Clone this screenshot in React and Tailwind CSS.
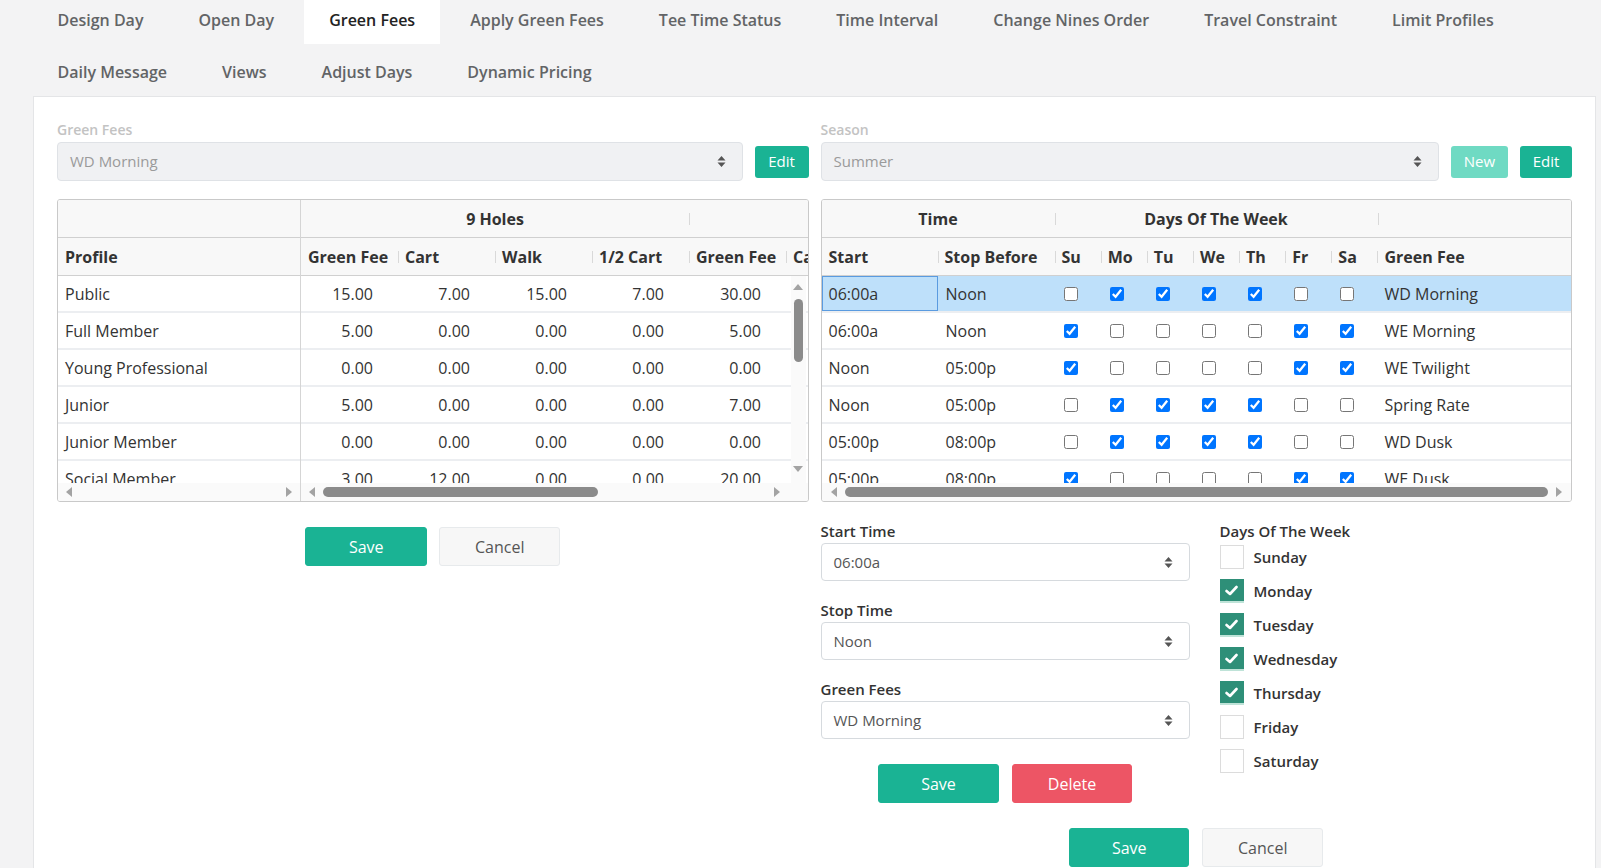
import React from 'react';

const TABS_1 = ['Design Day', 'Open Day', 'Green Fees', 'Apply Green Fees', 'Tee Time Status', 'Time Interval', 'Change Nines Order', 'Travel Constraint', 'Limit Profiles'];
const TABS_2 = ['Daily Message', 'Views', 'Adjust Days', 'Dynamic Pricing'];

const FEES = [
  ['Public', ['15.00', '7.00', '15.00', '7.00', '30.00']],
  ['Full Member', ['5.00', '0.00', '0.00', '0.00', '5.00']],
  ['Young Professional', ['0.00', '0.00', '0.00', '0.00', '0.00']],
  ['Junior', ['5.00', '0.00', '0.00', '0.00', '7.00']],
  ['Junior Member', ['0.00', '0.00', '0.00', '0.00', '0.00']],
  ['Social Member', ['3.00', '12.00', '0.00', '0.00', '20.00']],
];

const WD = [0, 1, 1, 1, 1, 0, 0];
const WE = [1, 0, 0, 0, 0, 1, 1];
const SEASON_ROWS = [
  ['06:00a', 'Noon', WD, 'WD Morning'],
  ['06:00a', 'Noon', WE, 'WE Morning'],
  ['Noon', '05:00p', WE, 'WE Twilight'],
  ['Noon', '05:00p', WD, 'Spring Rate'],
  ['05:00p', '08:00p', WD, 'WD Dusk'],
  ['05:00p', '08:00p', WE, 'WE Dusk'],
];

const DAYS = ['Su', 'Mo', 'Tu', 'We', 'Th', 'Fr', 'Sa'];
const DAY_LIST = [
  ['Sunday', false],
  ['Monday', true],
  ['Tuesday', true],
  ['Wednesday', true],
  ['Thursday', true],
  ['Friday', false],
  ['Saturday', false],
];

const SortIcon = () => (
  <svg width="9" height="13" viewBox="0 0 9 13">
    <path d="M4.5 1L8.5 5.5H0.5Z M4.5 12L8.5 7.5H0.5Z" fill="#555" />
  </svg>
);

const ArrowL = () => (
  <svg width="6" height="10" viewBox="0 0 6 10"><path d="M6 0V10L0 5Z" fill="#a3a3a3" /></svg>
);
const ArrowR = () => (
  <svg width="6" height="10" viewBox="0 0 6 10"><path d="M0 0V10L6 5Z" fill="#a3a3a3" /></svg>
);
const ArrowU = () => (
  <svg width="10" height="6" viewBox="0 0 10 6"><path d="M0 6H10L5 0Z" fill="#a3a3a3" /></svg>
);
const ArrowD = () => (
  <svg width="10" height="6" viewBox="0 0 10 6"><path d="M0 0H10L5 6Z" fill="#a3a3a3" /></svg>
);

const Tick = () => <span className="absolute left-0 top-1/2 -translate-y-1/2 h-[12px] w-px bg-[#d9d9d9]" />;

function Select({ value, disabled }) {
  return (
    <div
      className={
        disabled
          ? 'flex-1 h-[39px] flex items-center justify-between pl-[12px] pr-[16px] rounded-[4px] border border-[#dfe2e6] bg-[#f0f1f3] text-[#9a9a9a] text-[15px]'
          : 'flex-1 h-[38px] flex items-center justify-between pl-[12px] pr-[16px] rounded-[4px] border border-[#d6dade] bg-white text-[#555] text-[15px]'
      }
    >
      <span>{value}</span>
      <SortIcon />
    </div>
  );
}

function TopLabel({ children }) {
  return <div className="text-[14px] leading-[18px] font-semibold text-[#c3c3c3] mb-[3px]">{children}</div>;
}

function FeesTable() {
  return (
    <div className="mt-[18px] flex h-[303px] overflow-hidden rounded-[3px] border border-[#c9c9c9] bg-white text-[#333]">
      <div className="w-[243px] shrink-0 flex flex-col border-r border-[#d5d5d5]">
        <div className="h-[38px] shrink-0 border-b border-[#d0d0d0] bg-[#f8f8f8]" />
        <div className="h-[38px] shrink-0 flex items-center px-[7px] border-b border-[#d0d0d0] bg-[#f8f8f8] font-bold text-[16px]">Profile</div>
        <div className="h-[207px] shrink-0 overflow-hidden">
          {FEES.map(([name]) => (
            <div key={name} className="h-[37px] flex items-center px-[7px] border-b-2 border-[#eceef1] text-[16px]">
              {name}
            </div>
          ))}
        </div>
        <div className="flex-1 flex items-center justify-between px-[8px] bg-[#fafafa]">
          <ArrowL />
          <ArrowR />
        </div>
      </div>
      <div className="flex-1 min-w-0 flex flex-col">
        <div className="h-[38px] shrink-0 flex border-b border-[#d0d0d0] bg-[#f8f8f8]">
          <div className="w-[388px] shrink-0 flex items-center justify-center font-bold text-[16px]">9 Holes</div>
          <div className="relative flex-1"><Tick /></div>
        </div>
        <div className="h-[38px] shrink-0 grid grid-cols-[97px_97px_97px_97px_97px_97px] border-b border-[#d0d0d0] bg-[#f8f8f8] font-bold text-[16px] whitespace-nowrap overflow-hidden">
          {['Green Fee', 'Cart', 'Walk', '1/2 Cart', 'Green Fee', 'Cart'].map((h, i) => (
            <div key={i} className="relative flex items-center pl-[7px]">
              {i > 0 && <Tick />}
              {h}
            </div>
          ))}
        </div>
        <div className="relative h-[207px] shrink-0 overflow-hidden">
          {FEES.map(([name, vals]) => (
            <div key={name} className="h-[37px] grid grid-cols-[97px_97px_97px_97px_97px_97px] border-b-2 border-[#eceef1] text-[16px]">
              {vals.map((v, i) => (
                <div key={i} className="flex items-center justify-end pr-[25px]">{v}</div>
              ))}
            </div>
          ))}
          <div className="absolute right-[2px] top-0 bottom-0 w-[15px] bg-[#fafafa] flex flex-col items-center">
            <div className="mt-[8px]"><ArrowU /></div>
            <div className="mt-[9px] w-[9px] h-[63px] rounded-full bg-[#8b8b8b]" />
            <div className="mt-[104px]"><ArrowD /></div>
          </div>
        </div>
        <div className="flex-1 flex items-center px-[8px] bg-[#fafafa]">
          <ArrowL />
          <div className="ml-[8px] w-[275px] h-[10px] rounded-full bg-[#8b8b8b]" />
          <div className="ml-auto mr-[20px]"><ArrowR /></div>
        </div>
      </div>
    </div>
  );
}

const GRID_R = 'grid grid-cols-[116px_117px_repeat(7,46.15px)_1fr]';

function SeasonTable() {
  return (
    <div className="mt-[18px] flex flex-col h-[303px] overflow-hidden rounded-[3px] border border-[#c9c9c9] bg-white text-[#333]">
      <div className="h-[38px] shrink-0 flex border-b border-[#d0d0d0] bg-[#f8f8f8] font-bold text-[16px]">
        <div className="w-[233px] shrink-0 flex items-center justify-center">Time</div>
        <div className="relative w-[323px] shrink-0 flex items-center justify-center"><Tick />Days Of The Week</div>
        <div className="relative flex-1"><Tick /></div>
      </div>
      <div className={`${GRID_R} h-[38px] shrink-0 border-b border-[#d0d0d0] bg-[#f8f8f8] font-bold text-[16px] whitespace-nowrap`}>
        <div className="flex items-center pl-[7px]">Start</div>
        <div className="relative flex items-center pl-[7px]"><Tick />Stop Before</div>
        {DAYS.map((d) => (
          <div key={d} className="relative flex items-center pl-[7px]"><Tick />{d}</div>
        ))}
        <div className="relative flex items-center pl-[7px]"><Tick />Green Fee</div>
      </div>
      <div className="h-[207px] shrink-0 overflow-hidden">
        {SEASON_ROWS.map(([start, stop, days, fee], r) => (
          <div
            key={r}
            className={
              r === 0
                ? `${GRID_R} h-[37px] border-b-2 border-[#eceef1] text-[16px] bg-[#bee0fa]`
                : `${GRID_R} h-[37px] border-b-2 border-[#eceef1] text-[16px]`
            }
          >
            <div className={r === 0 ? 'flex items-center pl-[6px] border border-[#5a9be0]' : 'flex items-center pl-[7px]'}>{start}</div>
            <div className="flex items-center pl-[8px]">{stop}</div>
            {days.map((on, i) => (
              <div key={i} className="flex items-center pl-[9px]">
                <input type="checkbox" checked={!!on} readOnly className="m-0 w-[14px] h-[14px]" />
              </div>
            ))}
            <div className="flex items-center pl-[7px]">{fee}</div>
          </div>
        ))}
      </div>
      <div className="flex-1 flex items-center px-[9px] bg-[#fafafa]">
        <ArrowL />
        <div className="mx-[8px] flex-1 h-[10px] rounded-full bg-[#8b8b8b]" />
        <ArrowR />
      </div>
    </div>
  );
}

function Btn({ kind, children, w }) {
  const cls = {
    save: 'bg-[#1ab394] text-white border border-[#1ab394]',
    delete: 'bg-[#ed5565] text-white border border-[#ed5565]',
    cancel: 'bg-[#f7f7f7] text-[#555] border border-[#e7eaec]',
  }[kind];
  return (
    <button className={`${cls} ${w} h-[39px] rounded-[3px] text-[16px] flex items-center justify-center`}>{children}</button>
  );
}

function FormLabel({ children, first }) {
  return (
    <div className={first ? 'text-[15px] leading-[20px] font-semibold text-[#333] mb-[2px]' : 'mt-[19px] text-[15px] leading-[20px] font-semibold text-[#333] mb-[2px]'}>
      {children}
    </div>
  );
}

export default function App() {
  return (
    <div className="min-h-screen bg-[#f3f3f4] font-['Open_Sans',sans-serif] text-[#333]">
      <div className="pl-[30px]">
        <div className="flex h-[44px]">
          {TABS_1.map((t) => (
            <div
              key={t}
              className={
                t === 'Green Fees'
                  ? 'mx-[2.5px] px-[25px] pt-[8px] leading-[24px] text-[16px] font-semibold text-[#222] bg-white'
                  : 'mx-[2.5px] px-[25px] pt-[8px] leading-[24px] text-[16px] font-semibold text-[#626466]'
              }
            >
              {t}
            </div>
          ))}
        </div>
        <div className="flex h-[52px]">
          {TABS_2.map((t) => (
            <div key={t} className="mx-[2.5px] px-[25px] pt-[16px] leading-[24px] text-[16px] font-semibold text-[#626466]">
              {t}
            </div>
          ))}
        </div>
      </div>

      <div className="ml-[33px] w-[1563px] bg-white border border-[#e4e5e7] pt-[24px] px-[23px] pb-[40px]">
        <div className="grid grid-cols-2 gap-x-[12px]">
          <div>
            <TopLabel>Green Fees</TopLabel>
            <div className="flex items-center gap-[12px]">
              <Select value="WD Morning" disabled />
              <button className="w-[54px] h-[32px] rounded-[3px] bg-[#1ab394] text-white text-[15px]">Edit</button>
            </div>
            <FeesTable />
            <div className="mt-[25px] flex justify-center gap-[12px]">
              <Btn kind="save" w="w-[122px]">Save</Btn>
              <Btn kind="cancel" w="w-[121px]">Cancel</Btn>
            </div>
          </div>

          <div>
            <TopLabel>Season</TopLabel>
            <div className="flex items-center gap-[12px]">
              <Select value="Summer" disabled />
              <button className="w-[57px] h-[32px] rounded-[3px] bg-[#6fdac3] text-white text-[15px]">New</button>
              <button className="w-[52px] h-[32px] rounded-[3px] bg-[#1ab394] text-white text-[15px]">Edit</button>
            </div>
            <SeasonTable />

            <div className="mt-[19px] flex gap-[30px]">
              <div className="w-[369px]">
                <FormLabel first>Start Time</FormLabel>
                <div className="flex"><Select value="06:00a" /></div>
                <FormLabel>Stop Time</FormLabel>
                <div className="flex"><Select value="Noon" /></div>
                <FormLabel>Green Fees</FormLabel>
                <div className="flex"><Select value="WD Morning" /></div>
                <div className="mt-[25px] flex justify-center gap-[13px]">
                  <Btn kind="save" w="w-[121px]">Save</Btn>
                  <Btn kind="delete" w="w-[120px]">Delete</Btn>
                </div>
              </div>
              <div>
                <div className="text-[15px] leading-[20px] font-semibold text-[#333]">Days Of The Week</div>
                <div className="mt-[4px] flex flex-col gap-[10px]">
                  {DAY_LIST.map(([d, on]) => (
                    <div key={d} className="flex items-center gap-[10px] h-[24px]">
                      <span
                        className={
                          on
                            ? 'w-[24px] h-[24px] flex items-center justify-center bg-[#2e8f78] border-b-2 border-[#bfe3d8]'
                            : 'w-[24px] h-[24px] bg-white border border-[#dcdcdc]'
                        }
                      >
                        {on && (
                          <svg width="13" height="11" viewBox="0 0 13 11">
                            <path d="M1.5 6L5 9L11.5 2" stroke="white" strokeWidth="2.6" fill="none" strokeLinecap="round" strokeLinejoin="round" />
                          </svg>
                        )}
                      </span>
                      <span className="text-[15px] font-semibold text-[#333]">{d}</span>
                    </div>
                  ))}
                </div>
              </div>
            </div>

            <div className="mt-[25px] flex justify-center gap-[13px]">
              <Btn kind="save" w="w-[120px]">Save</Btn>
              <Btn kind="cancel" w="w-[121px]">Cancel</Btn>
            </div>
          </div>
        </div>
      </div>
    </div>
  );
}
